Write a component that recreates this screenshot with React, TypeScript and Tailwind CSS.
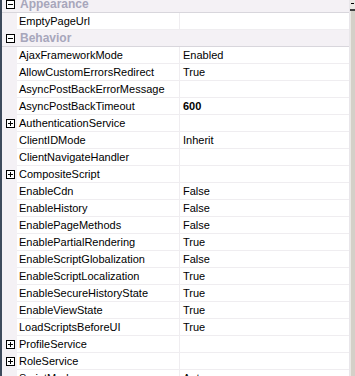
import React from 'react';

type Row =
  | { kind: 'cat'; label: string }
  | { kind: 'prop'; name: string; value?: string; expand?: boolean; bold?: boolean };

const rows: Row[] = [
  { kind: 'cat', label: 'Appearance' },
  { kind: 'prop', name: 'EmptyPageUrl' },
  { kind: 'cat', label: 'Behavior' },
  { kind: 'prop', name: 'AjaxFrameworkMode', value: 'Enabled' },
  { kind: 'prop', name: 'AllowCustomErrorsRedirect', value: 'True' },
  { kind: 'prop', name: 'AsyncPostBackErrorMessage' },
  { kind: 'prop', name: 'AsyncPostBackTimeout', value: '600', bold: true },
  { kind: 'prop', name: 'AuthenticationService', expand: true },
  { kind: 'prop', name: 'ClientIDMode', value: 'Inherit' },
  { kind: 'prop', name: 'ClientNavigateHandler' },
  { kind: 'prop', name: 'CompositeScript', expand: true },
  { kind: 'prop', name: 'EnableCdn', value: 'False' },
  { kind: 'prop', name: 'EnableHistory', value: 'False' },
  { kind: 'prop', name: 'EnablePageMethods', value: 'False' },
  { kind: 'prop', name: 'EnablePartialRendering', value: 'True' },
  { kind: 'prop', name: 'EnableScriptGlobalization', value: 'False' },
  { kind: 'prop', name: 'EnableScriptLocalization', value: 'True' },
  { kind: 'prop', name: 'EnableSecureHistoryState', value: 'True' },
  { kind: 'prop', name: 'EnableViewState', value: 'True' },
  { kind: 'prop', name: 'LoadScriptsBeforeUI', value: 'True' },
  { kind: 'prop', name: 'ProfileService', expand: true },
  { kind: 'prop', name: 'RoleService', expand: true },
  { kind: 'prop', name: 'ScriptMode', value: 'Auto' },
];

function Box({ open }: { open: boolean }) {
  return (
    <svg width="9" height="9" viewBox="0 0 9 9" className="block">
      <rect x="0.5" y="0.5" width="8" height="8" fill="#fff" stroke="#000" />
      <path d="M2 4.5h5" stroke="#000" />
      {!open && <path d="M4.5 2v5" stroke="#000" />}
    </svg>
  );
}

export default function App() {
  return (
    <div
      className="flex w-[355px] h-[376px] overflow-hidden bg-white text-[11px] text-black"
      style={{ fontFamily: '"Liberation Sans", Arial, sans-serif' }}
    >
      <div className="w-[2px] bg-[#3d4a5c]" />
      <div className="flex-1 overflow-hidden">
        <div className="-mt-[4px]">
          {rows.map((r, i) =>
            r.kind === 'cat' ? (
              <div key={i} className="flex items-center h-[17px] bg-[#f4f1f5] border-b border-[#d8d6dc]">
                <div className="w-[15px] flex justify-center pl-[1px]">
                  <Box open />
                </div>
                <span className="pl-[3px] font-bold text-[12px] text-[#a7a6bb]">{r.label}</span>
              </div>
            ) : (
              <div key={i} className="flex h-[17px] bg-[#f4f1f5]">
                <div className="w-[15px] flex items-center justify-center pl-[1px]">
                  {r.expand && <Box open={false} />}
                </div>
                <div className="flex flex-1 bg-white border-b border-[#efedf0]">
                  <div className="w-[163px] pl-[2px] flex items-center border-r border-[#efedf0] whitespace-nowrap overflow-hidden">
                    {r.name}
                  </div>
                  <div className={`flex-1 pl-[3px] flex items-center ${r.bold ? 'font-bold' : ''}`}>
                    {r.value}
                  </div>
                </div>
              </div>
            )
          )}
        </div>
      </div>
      <div className="w-[6px] flex flex-col border-l border-[#e8e6ea] bg-[#d4d0c8]">
        <div className="h-[11px] bg-[#ece9e4] border-b-2 border-[#404040] flex items-start justify-center pt-[3px]">
          <div className="w-[3px] h-[1px] bg-black" />
        </div>
        <div className="flex-1 bg-[#d4d0c8] border-l border-[#ebe9e5]" />
      </div>
    </div>
  );
}
